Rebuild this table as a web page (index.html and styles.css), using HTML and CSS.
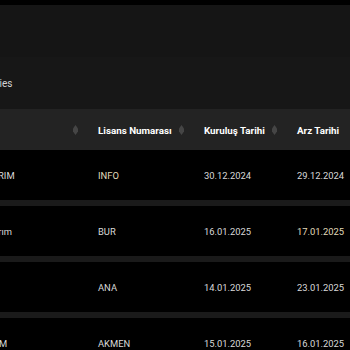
FILE: index.html
```html
<!DOCTYPE html>
<html>
<head>
<meta charset="utf-8">
<link rel="stylesheet" href="styles.css">
</head>
<body>
<div class="topbar"></div>
<div class="panel-head"></div>
<div class="panel-title"><span class="title-text">Companies</span></div>
<div class="table-wrap">
  <table class="grid">
    <colgroup>
      <col class="c1"><col class="c2"><col class="c3"><col class="c4"><col class="c5">
    </colgroup>
    <thead>
      <tr>
        <th><span class="hcell"><span class="hlabel">Şirket</span><span class="sort"></span></span></th>
        <th><span class="hcell"><span class="hlabel">Lisans Numarası</span><span class="sort"></span></span></th>
        <th><span class="hcell"><span class="hlabel">Kuruluş Tarihi</span><span class="sort"></span></span></th>
        <th><span class="hcell"><span class="hlabel">Arz Tarihi</span><span class="sort"></span></span></th>
        <th><span class="hcell"><span class="hlabel">Durum</span><span class="sort"></span></span></th>
      </tr>
    </thead>
    <tbody>
      <tr><td>İNFO YATIRIM</td><td class="accent">INFO</td><td>30.12.2024</td><td>29.12.2024</td><td>Aktif</td></tr>
      <tr><td>Bursa Yatırım</td><td>BUR</td><td>16.01.2025</td><td class="accent">17.01.2025</td><td>Aktif</td></tr>
      <tr><td>Ana A.Ş.</td><td>ANA</td><td>14.01.2025</td><td>23.01.2025</td><td>Aktif</td></tr>
      <tr><td>GIDA TARIM</td><td>AKMEN</td><td>15.01.2025</td><td>16.01.2025</td><td>Aktif</td></tr>
    </tbody>
  </table>
</div>
</body>
</html>
```

FILE: styles.css
```css
html, body {
  margin: 0;
  padding: 0;
  background: #161616;
  font-family: Roboto, "Liberation Sans", sans-serif;
  overflow: hidden;
}
.topbar {
  height: 5px;
  background: #000;
}
.panel-head {
  height: 52px;
  background: #151515;
}
.panel-title {
  height: 52px;
  background: #171717;
  display: flex;
  align-items: center;
  margin-left: -38px;
}
.title-text {
  color: #d4d4d4;
  font-size: 10px;
  padding-top: 1px;
}
.table-wrap {
  margin-left: -56px;
}
.grid {
  border-collapse: separate;
  border-spacing: 0;
  table-layout: fixed;
  width: 502px;
}
.c1 { width: 142px; }
.c2 { width: 106px; }
.c3 { width: 93px; }
.c4 { width: 93px; }
.c5 { width: 68px; }
.grid th {
  height: 41px;
  box-sizing: border-box;
  background: #232323;
  padding: 1px 8px 0 12px;
  text-align: left;
  color: #ffffff;
  font-weight: 700;
  font-size: 9.8px;
}
.hcell {
  display: flex;
  align-items: center;
  justify-content: space-between;
}
.sort {
  width: 5px;
  height: 10px;
  background: #454545;
  clip-path: polygon(50% 0, 100% 35%, 100% 65%, 50% 100%, 0 65%, 0 35%);
  flex: none;
}
.grid td {
  height: 56px;
  box-sizing: border-box;
  background: #000;
  border-bottom: 6px solid #1a1a1a;
  padding: 1px 12px 0 12px;
  color: #dadada;
  font-size: 9.4px;
  white-space: nowrap;
  overflow: hidden;
}
.grid td.accent {
  color: #e2dcbc;
}
```
